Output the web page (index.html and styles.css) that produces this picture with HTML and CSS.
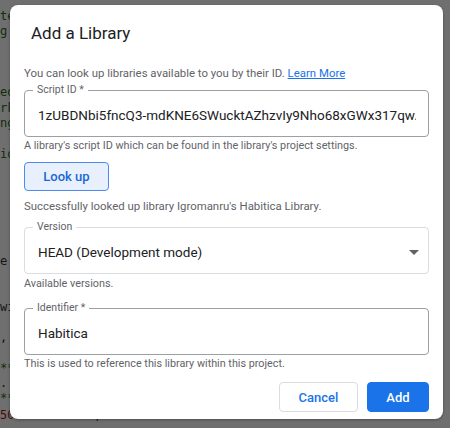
FILE: index.html
```html
<!DOCTYPE html>
<html lang="en">
<head>
<meta charset="utf-8">
<title>Add a Library</title>
<link rel="stylesheet" href="styles.css">
</head>
<body>
<div class="editor">
  <div class="code">
    <div class="ln green">te</div>
    <div class="ln green">g</div>
    <div class="ln"></div>
    <div class="ln"></div>
    <div class="ln"></div>
    <div class="ln green">ed</div>
    <div class="ln green">rk</div>
    <div class="ln green">ng</div>
    <div class="ln"></div>
    <div class="ln green">io</div>
    <div class="ln"></div>
    <div class="ln"></div>
    <div class="ln"></div>
    <div class="ln"></div>
    <div class="ln"></div>
    <div class="ln"></div>
    <div class="ln">e</div>
    <div class="ln"></div>
    <div class="ln"></div>
    <div class="ln">wi</div>
    <div class="ln"></div>
    <div class="ln">,</div>
    <div class="ln"></div>
    <div class="ln green">**</div>
    <div class="ln">.</div>
    <div class="ln green">**</div>
    <div class="ln last red">50b07489def8";</div>
  </div>
</div>
<div class="scrim">
  <div class="dialog">
    <h1 class="title">Add a Library</h1>
    <p class="desc">You can look up libraries available to you by their ID. <a href="#" class="link">Learn More</a></p>

    <fieldset class="field strong">
      <legend>Script ID *</legend>
      <div class="value">1zUBDNbi5fncQ3-mdKNE6SWucktAZhzvIy9Nho68xGWx317qwAk3</div>
    </fieldset>
    <p class="hint">A library's script ID which can be found in the library's project settings.</p>

    <button class="lookup" type="button">Look up</button>
    <p class="msg">Successfully looked up library Igromanru's Habitica Library.</p>

    <fieldset class="field light version">
      <legend>Version</legend>
      <div class="row">
        <div class="value">HEAD (Development mode)</div>
        <span class="caret"></span>
      </div>
    </fieldset>
    <p class="hint">Available versions.</p>

    <fieldset class="field strong ident">
      <legend>Identifier *</legend>
      <div class="value">Habitica</div>
    </fieldset>
    <p class="hint">This is used to reference this library within this project.</p>

    <div class="actions">
      <button class="btn cancel" type="button">Cancel</button>
      <button class="btn add" type="button">Add</button>
    </div>
  </div>
</div>
</body>
</html>
```

FILE: styles.css
```css
* { box-sizing: border-box; }

html, body {
  margin: 0;
  padding: 0;
  width: 450px;
  height: 428px;
  overflow: hidden;
  background: #ffffff;
}

body {
  position: relative;
  font-family: Roboto, "Liberation Sans", Arial, sans-serif;
}

.editor {
  padding-top: 9px;
}

.code {
  font-family: "DejaVu Sans Mono", "Liberation Mono", monospace;
  font-size: 12px;
  color: #333333;
}

.ln {
  height: 15.3px;
  line-height: 15.3px;
  white-space: pre;
}

.ln.green { color: #2a6a2a; }
.ln.red { color: #a31515; }
.ln.last { margin-top: 1px; }

.scrim {
  position: absolute;
  inset: 0;
  background: rgba(0, 0, 0, 0.565);
  padding: 5px 7px 0 10px;
}

.dialog {
  width: 433px;
  height: 414px;
  background: #ffffff;
  border-radius: 8px;
  padding: 16px 14px 7px 14px;
  display: flex;
  flex-direction: column;
  box-shadow: 0 1px 3px rgba(0,0,0,0.3);
}

.dialog > * { flex-shrink: 0; }

.title {
  margin: 0;
  padding-left: 7px;
  font-family: Roboto, "Open Sans", sans-serif;
  font-weight: 400;
  font-size: 17px;
  line-height: 24px;
  color: #202124;
}

.desc {
  margin: 20px 0 0 0;
  font-size: 11.4px;
  line-height: 16px;
  color: #5f6368;
}

.link {
  color: #1a73e8;
  text-decoration: underline;
}

.field {
  margin: 3px 0 0 0;
  padding: 0 12px 0 8px;
  border-radius: 4px;
  min-width: 0;
}

.field.strong { border: 1px solid #9aa0a6; }
.field.light { border: 1px solid #dadce0; }

.field legend {
  padding: 0 4px;
  font-size: 10.5px;
  line-height: 12px;
  color: #5f6368;
}

.value {
  padding: 9px 0 11px 5px;
  font-size: 13.5px;
  line-height: 20px;
  color: #202124;
  white-space: nowrap;
  overflow: hidden;
}

.row {
  display: flex;
  align-items: center;
}

.row .value { flex: 1; }

.caret {
  width: 0;
  height: 0;
  border-left: 5px solid transparent;
  border-right: 5px solid transparent;
  border-top: 5px solid #5f6368;
  margin-right: -3px;
  margin-top: -1px;
}

.hint {
  margin: 2px 0 0 0;
  font-size: 10.8px;
  line-height: 14px;
  color: #5f6368;
}

.lookup {
  margin-top: 9px;
  align-self: flex-start;
  width: 85px;
  height: 29px;
  border: 1px solid #4c8af0;
  border-radius: 4px;
  background: #e8f0fe;
  color: #1967d2;
  font-family: Roboto, sans-serif;
  font-size: 13px;
  font-weight: 500;
  padding: 0;
}

.msg {
  margin: 7px 0 0 0;
  font-size: 11.4px;
  line-height: 16px;
  color: #5f6368;
}

.field.version { margin-top: 7px; }
.field.version + .hint { margin-top: 3px; }
.field.ident { margin-top: 11px; }
.field.ident + .hint { margin-top: 2px; }

.actions {
  margin-top: 11px;
  display: flex;
  justify-content: flex-end;
  gap: 9px;
}

.btn {
  height: 30px;
  border-radius: 4px;
  font-family: Roboto, sans-serif;
  font-size: 13px;
  font-weight: 500;
  padding: 0;
}

.cancel {
  width: 79px;
  border: 1px solid #dadce0;
  background: #ffffff;
  color: #1a73e8;
}

.add {
  width: 62px;
  border: 1px solid #1a73e8;
  background: #1a73e8;
  color: #ffffff;
}
```
